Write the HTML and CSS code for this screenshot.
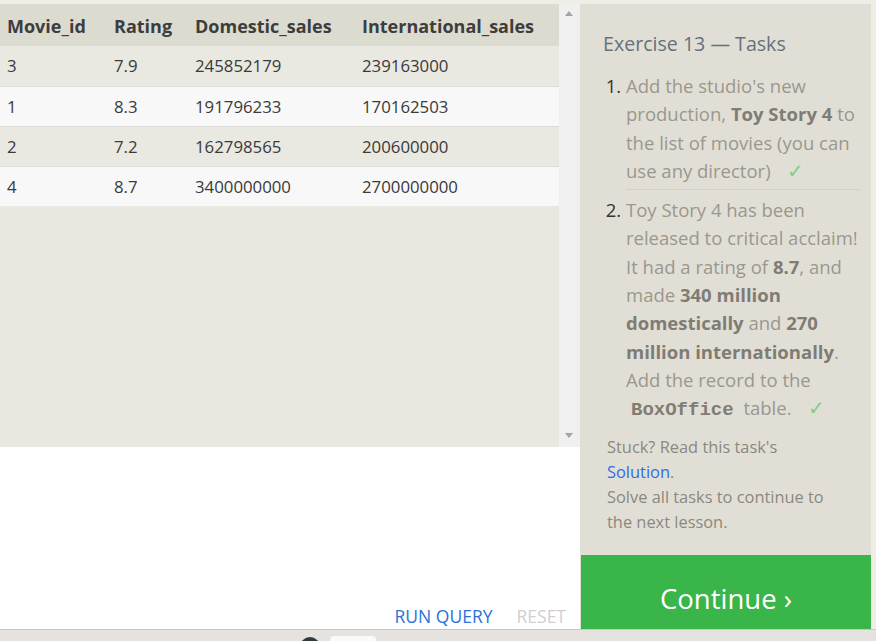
FILE: index.html
```html
<!DOCTYPE html>
<html>
<head>
<meta charset="utf-8">
<link rel="stylesheet" href="styles.css">
</head>
<body>
<div class="app">
  <div class="left">
    <div class="results">
      <div class="table-wrap">
        <table class="grid">
          <thead>
            <tr><th class="c1">Movie_id</th><th class="c2">Rating</th><th class="c3">Domestic_sales</th><th class="c4">International_sales</th></tr>
          </thead>
          <tbody>
            <tr><td>3</td><td>7.9</td><td>245852179</td><td>239163000</td></tr>
            <tr><td>1</td><td>8.3</td><td>191796233</td><td>170162503</td></tr>
            <tr><td>2</td><td>7.2</td><td>162798565</td><td>200600000</td></tr>
            <tr><td>4</td><td>8.7</td><td>3400000000</td><td>2700000000</td></tr>
          </tbody>
        </table>
      </div>
      <div class="scrollbar">
        <span class="arrow up"></span>
        <span class="arrow down"></span>
      </div>
    </div>
    <div class="editor">
      <div class="actions">
        <span class="run">RUN QUERY</span>
        <span class="reset">RESET</span>
      </div>
    </div>
  </div>
  <div class="panel">
    <div class="tasks">
      <h2 class="title">Exercise 13 — Tasks</h2>
      <ol class="task-list">
        <li class="task">Add the studio's new production, <b>Toy Story 4</b> to the list of movies (you can use any director) <span class="check">✓</span></li>
        <li class="task">Toy Story 4 has been released to critical acclaim! It had a rating of <b>8.7</b>, and made <b>340 million domestically</b> and <b>270 million internationally</b>. Add the record to the <code>BoxOffice</code> table. <span class="check">✓</span></li>
      </ol>
      <p class="hint">Stuck? Read this task's <a class="link">Solution</a>.<br>Solve all tasks to continue to the next lesson.</p>
    </div>
    <div class="continue">Continue ›</div>
  </div>
  <div class="edge"></div>
</div>
<div class="taskbar">
  <span class="tb-circle"></span>
  <span class="tb-tab"></span>
</div>
</body>
</html>
```
FILE: styles.css
```css
html, body {
  margin: 0;
  padding: 0;
}
body {
  width: 876px;
  height: 641px;
  overflow: hidden;
  background: #efede6;
  font-family: "Open Sans", "Noto Sans", sans-serif;
  display: flex;
  flex-direction: column;
}
.app {
  display: flex;
  height: 625px;
  padding-top: 4px;
}
.left {
  width: 580px;
  display: flex;
  flex-direction: column;
}
.results {
  height: 443px;
  display: flex;
  background: #e8e7e0;
}
.table-wrap {
  flex: 1;
}
.grid {
  border-collapse: collapse;
  width: 559px;
  color: #333;
}
.grid th {
  background: #dcdbd0;
  font-weight: 700;
  font-size: 18px;
  text-align: left;
  height: 40px;
  padding: 2px 0 0 7px;
  color: #3d3d3d;
}
.grid td {
  font-size: 16.8px;
  height: 40px;
  padding: 0 0 0 7px;
  box-sizing: border-box;
  border-bottom: 1px solid #dddcd6;
  color: #3a3a3a;
}
.grid tbody tr:nth-child(odd) td { background: #e9e8e1; }
.grid tbody tr:nth-child(even) td { background: #f8f8f8; }
.grid tbody tr:last-child td { border-bottom: none; }
.c1 { width: 100px; }
.c2 { width: 74px; }
.c3 { width: 160px; }
.scrollbar {
  width: 21px;
  background: #f0f0f0;
  position: relative;
}
.arrow {
  position: absolute;
  left: 6px;
  width: 0;
  height: 0;
  border-left: 4px solid transparent;
  border-right: 4px solid transparent;
}
.arrow.up { top: 7px; border-bottom: 5px solid #a3a3a3; }
.arrow.down { bottom: 9px; border-top: 5px solid #a3a3a3; }
.editor {
  flex: 1;
  background: #fff;
  display: flex;
  align-items: flex-end;
  justify-content: flex-end;
}
.actions {
  display: flex;
  gap: 24px;
  padding: 0 14px 1px 0;
  font-size: 17.5px;
}
.run { color: #2a72d8; }
.reset { color: #cfcfcf; }
.panel {
  width: 291px;
  background: #e1dfd5;
  display: flex;
  flex-direction: column;
}
.tasks {
  flex: 1;
  padding: 0 10px 0 23px;
}
.title {
  margin: 26px 0 0 0;
  font-size: 19.6px;
  font-weight: 400;
  color: #66717e;
  line-height: 28px;
}
.task-list {
  margin: 14px 0 0 0;
  padding: 0 0 0 23px;
}
.task {
  font-size: 18.5px;
  line-height: 28.3px;
  color: #9a978e;
  padding-bottom: 4px;
}
.task::marker {
  color: #333;
}
.task + .task {
  border-top: 1px solid #d4d2c8;
  padding-top: 6px;
  margin-top: 0;
}
.task b { color: #7f7c74; }
.task code {
  font-family: "Liberation Mono", "DejaVu Sans Mono", monospace;
  font-weight: 700;
  color: #7f7c74;
  font-size: 19px;
  padding: 0 5px;
}
.check {
  color: #7fcf87;
  margin-left: 12px;
  font-size: 20px;
}
.hint {
  margin: 5px 0 0 4px;
  width: 232px;
  font-size: 16.4px;
  line-height: 25px;
  color: #8b887f;
}
.link { color: #2f6de8; }
.continue {
  height: 74px;
  box-sizing: border-box;
  padding-top: 12px;
  background: #3ab54a;
  color: #fff;
  font-size: 27.5px;
  display: flex;
  align-items: center;
  justify-content: center;
  margin-left: 1px;
}
.edge {
  width: 5px;
  background: #f0ede6;
}
.taskbar {
  flex: 1;
  border-top: 1px solid #c9c7c5;
  background: #e6e2df;
  position: relative;
}
.tb-circle {
  position: absolute;
  left: 300px;
  top: 7px;
  width: 20px;
  height: 20px;
  border-radius: 50%;
  background: #2f3a40;
}
.tb-tab {
  position: absolute;
  left: 330px;
  top: 6px;
  width: 46px;
  height: 14px;
  border-radius: 4px;
  background: #fafafa;
}
```
